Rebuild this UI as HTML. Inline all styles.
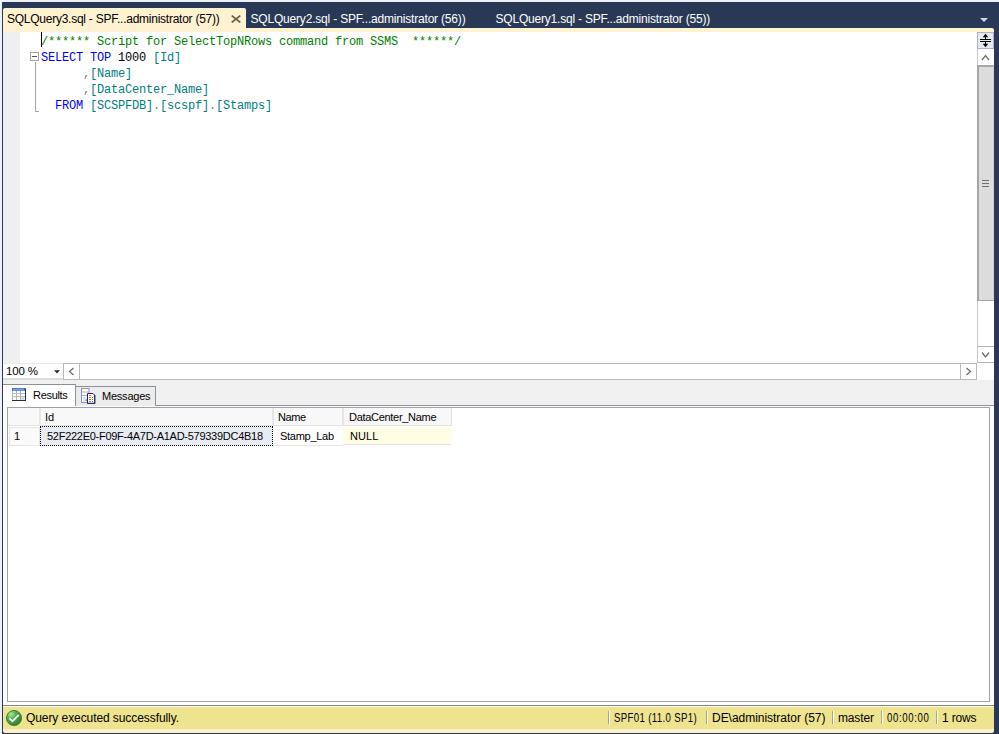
<!DOCTYPE html>
<html><head><meta charset="utf-8">
<style>
*{margin:0;padding:0;box-sizing:border-box}
html,body{width:999px;height:734px;overflow:hidden;background:#eef1f9;position:relative}
.a{position:absolute}
.ui{font-family:"Liberation Sans",sans-serif;font-size:12px;white-space:pre;line-height:14px}
.mono{font-family:"Liberation Mono",monospace;font-size:12px;white-space:pre;line-height:16px;letter-spacing:-0.2px}
.cm{color:#008000}.kw{color:#0000ff}.id{color:#008080}.op{color:#808080}.nm{color:#000}
</style></head><body>
<!-- navy frame -->
<div class="a" style="left:2px;top:2px;width:997px;height:732px;background:#293955"></div>

<!-- tabs -->
<div class="a" style="left:3px;top:8px;width:243px;height:22px;background:#fff2d0;border-radius:2px 2px 0 0"></div>
<div class="a ui" style="left:7px;top:12px;color:#000;letter-spacing:-0.25px">SQLQuery3.sql - SPF...administrator (57))</div>
<svg class="a" style="left:231px;top:15px" width="10" height="8" viewBox="0 0 10 8"><path d="M0.7 0.6L9.3 7.4M9.3 0.6L0.7 7.4" stroke="#6b5a3a" stroke-width="1.6"/></svg>
<div class="a ui" style="left:250.5px;top:12px;color:#fff;letter-spacing:-0.19px">SQLQuery2.sql - SPF...administrator (56))</div>
<div class="a ui" style="left:495.5px;top:12px;color:#fff;letter-spacing:-0.2px">SQLQuery1.sql - SPF...administrator (55))</div>
<svg class="a" style="left:980px;top:18px" width="8" height="4" viewBox="0 0 8 4"><path d="M0 0H8L4 4Z" fill="#cfd6e5"/></svg>

<!-- yellow line -->
<div class="a" style="left:3px;top:28px;width:991px;height:4px;background:#fff2d0;border-radius:0 2px 0 0"></div>

<!-- editor -->
<div class="a" style="left:3px;top:32px;width:974px;height:331px;background:#fff"></div>
<div class="a" style="left:3px;top:32px;width:17px;height:331px;background:#efefef"></div>
<div class="a" style="left:41px;top:32px;width:1px;height:15px;background:#000"></div>
<!-- fold -->
<div class="a" style="left:30px;top:52px;width:9px;height:9px;border:1px solid #a5a5a5;background:#fff"></div>
<div class="a" style="left:32px;top:56px;width:5px;height:1px;background:#555"></div>
<div class="a" style="left:35px;top:62px;width:1px;height:50px;background:#a5a5a5"></div>
<div class="a" style="left:35px;top:111px;width:4px;height:1px;background:#a5a5a5"></div>

<div class="a mono" style="left:41px;top:34px"><span class="cm">/****** Script for SelectTopNRows command from SSMS  ******/</span>
<span class="kw">SELECT</span> <span class="kw">TOP</span> <span class="nm">1000</span> <span class="id">[Id]</span>
      <span class="op">,</span><span class="id">[Name]</span>
      <span class="op">,</span><span class="id">[DataCenter_Name]</span>
  <span class="kw">FROM</span> <span class="id">[SCSPFDB]</span><span class="op">.</span><span class="id">[scspf]</span><span class="op">.</span><span class="id">[Stamps]</span></div>

<!-- editor vscroll -->
<div class="a" style="left:977px;top:32px;width:17px;height:331px;background:#fff;border-left:1px solid #c8c8c8"></div>
<div class="a" style="left:977px;top:32px;width:17px;height:17px;background:#e6e9ef;border:1px solid #a9b3c4"></div>
<svg class="a" style="left:977px;top:32px" width="17" height="17" viewBox="0 0 17 17">
<path d="M3 7.5H14M3 9.5H14" stroke="#000" stroke-width="1"/>
<path d="M8.5 1.8L5.7 5.2H11.3Z M8.5 15.2L5.7 11.8H11.3Z" fill="#000"/>
<path d="M8.5 5V7M8.5 10V12" stroke="#000" stroke-width="1"/>
</svg>
<svg class="a" style="left:977px;top:49px" width="17" height="16" viewBox="0 0 17 16"><path d="M5 11L8.5 6.5L12 11" stroke="#6d6d6d" stroke-width="1.3" fill="none"/></svg>
<div class="a" style="left:977px;top:65px;width:17px;height:236px;background:#dcdcdc;border-left:2px solid #a6a6a6;border-top:2px solid #a6a6a6;border-bottom:1px solid #a6a6a6;border-right:1px solid #d0d0d0"></div>
<div class="a" style="left:982px;top:180px;width:7px;height:1px;background:#707070"></div>
<div class="a" style="left:982px;top:183px;width:7px;height:1px;background:#707070"></div>
<div class="a" style="left:982px;top:186px;width:7px;height:1px;background:#707070"></div>
<div class="a" style="left:977px;top:346px;width:17px;height:17px;border-top:1px solid #b5b5b5;border-bottom:1px solid #b5b5b5"></div>
<svg class="a" style="left:977px;top:346px" width="17" height="17" viewBox="0 0 17 17"><path d="M5 6.5L8.5 11L12 6.5" stroke="#6d6d6d" stroke-width="1.3" fill="none"/></svg>

<!-- zoom/hscroll bar -->
<div class="a" style="left:3px;top:363px;width:991px;height:17px;background:#fff"></div>
<div class="a" style="left:3px;top:363px;width:60px;height:17px;background:#fff;border-top:1px solid #e8e8e8;border-bottom:2px solid #dcdcdc"></div>
<div class="a ui" style="left:6px;top:364px;color:#000;font-size:11.5px;letter-spacing:-0.15px">100 %</div>
<svg class="a" style="left:54px;top:370px" width="6" height="4" viewBox="0 0 6 4"><path d="M0 0.3H6L3 3.6Z" fill="#1e2a40"/></svg>
<div class="a" style="left:63px;top:363px;width:898px;height:17px;border:1px solid #b8b8b8"></div>
<div class="a" style="left:79px;top:363px;width:1px;height:17px;background:#b8b8b8"></div>
<div class="a" style="left:960px;top:363px;width:17px;height:17px;border:1px solid #b8b8b8"></div>
<svg class="a" style="left:63px;top:363px" width="17" height="17" viewBox="0 0 17 17"><path d="M10.5 5L6.5 8.5L10.5 12" stroke="#6d6d6d" stroke-width="1.3" fill="none"/></svg>
<svg class="a" style="left:960px;top:363px" width="17" height="17" viewBox="0 0 17 17"><path d="M6.5 5L10.5 8.5L6.5 12" stroke="#6d6d6d" stroke-width="1.3" fill="none"/></svg>

<!-- splitter + results tab strip -->
<div class="a" style="left:3px;top:380px;width:991px;height:27px;background:#f0f0f0"></div>
<div class="a" style="left:3px;top:405px;width:991px;height:1px;background:#8c9099"></div>
<div class="a" style="left:3px;top:384px;width:73px;height:23px;background:#fff;border-top:1px solid #8c9099;border-right:1px solid #8c9099"></div>
<div class="a" style="left:75px;top:386px;width:81px;height:20px;background:#ececec;border:1px solid #8c9099;border-bottom:none"></div>
<!-- results icon -->
<svg class="a" style="left:12px;top:388px" width="14" height="13" viewBox="0 0 14 13">
<rect x="0" y="0" width="14" height="13" fill="#b4b4b4"/>
<rect x="1" y="3" width="12" height="9" fill="#fff"/>
<rect x="0" y="0" width="14" height="2.6" fill="#3f72d8"/>
<rect x="1" y="0.8" width="11" height="1.2" fill="#78a4ec"/>
<path d="M1 5.6H13M1 8.6H13M4.5 3V12M8.5 3V12" stroke="#b4b4b4" stroke-width="1"/>
<path d="M13.5 1V13M0 12.5H14" stroke="#2a2a3a" stroke-width="1"/>
<rect x="9.2" y="9.2" width="3.3" height="2.5" fill="#b8dcf8"/>
</svg>
<div class="a ui" style="left:33px;top:388px;color:#000;font-size:11px;letter-spacing:-0.31px">Results</div>
<!-- messages icon -->
<svg class="a" style="left:81px;top:388px" width="15" height="16" viewBox="0 0 15 16">
<rect x="0.5" y="0.5" width="7.5" height="14" fill="#fff" stroke="#8a8ad0"/>
<path d="M0.5 0.5H8" stroke="#9a9a9a"/>
<path d="M1 4H7.5M1 7.5H7.5" stroke="#b0b0b8" stroke-width="1"/>
<rect x="2" y="8.5" width="5" height="5" fill="#d8ecfa"/>
<rect x="4.5" y="11.5" width="1.5" height="1.5" fill="#3cc040"/>
<path d="M6.5 5.5H12L13.8 7.3V15.5H6.5Z" fill="#fff" stroke="#20206a" stroke-width="1"/>
<path d="M13.6 7V15.4H6.8" stroke="#2a2a70" stroke-width="1.1" fill="none"/>
<path d="M8 7.5H10M8 9.5H10M8 11.5H10M8 13.5H10" stroke="#f06030" stroke-width="1"/>
<path d="M11 9.5H12M11 11.5H12M11 13.5H12" stroke="#3a8a3a" stroke-width="1"/>
</svg>
<div class="a ui" style="left:102px;top:388.5px;color:#000;font-size:11px;letter-spacing:-0.22px">Messages</div>

<!-- results grid -->
<div class="a" style="left:3px;top:406px;width:991px;height:299px;background:#fcfcfc"></div>
<div class="a" style="left:7px;top:407px;width:983px;height:295px;background:#fff;border:1px solid #a0a0a8"></div>
<!-- header -->
<div class="a" style="left:8px;top:408px;width:444px;height:18px;background:#f8f8f8;border-right:1px solid #e2e2e2;border-bottom:1px solid #e2e2e2"></div>
<div class="a" style="left:39px;top:408px;width:2px;height:18px;background:#e6e6e6"></div>
<div class="a" style="left:272px;top:408px;width:2px;height:18px;background:#e6e6e6"></div>
<div class="a" style="left:342px;top:408px;width:2px;height:18px;background:#e6e6e6"></div>
<div class="a ui" style="left:45px;top:410px;color:#000;font-size:11px">Id</div>
<div class="a ui" style="left:278px;top:410px;color:#000;font-size:11px;letter-spacing:-0.41px">Name</div>
<div class="a ui" style="left:349px;top:410px;color:#000;font-size:11px;letter-spacing:-0.3px">DataCenter_Name</div>
<!-- row 1 -->
<div class="a" style="left:9px;top:427px;width:31px;height:19px;background:#fafafa;border:1px solid #e6e6e6"></div>
<div class="a ui" style="left:14px;top:429px;color:#000;font-size:11px">1</div>
<div class="a" style="left:40px;top:426px;width:233px;height:20px;background:#e8ecf2;border:1px dotted #000"></div>
<div class="a ui" style="left:47px;top:429px;color:#000;font-size:11px;letter-spacing:-0.275px">52F222E0-F09F-4A7D-A1AD-579339DC4B18</div>
<div class="a" style="left:273px;top:445px;width:70px;height:1px;background:#e6e6e6"></div>
<div class="a ui" style="left:280px;top:429px;color:#000;font-size:11px;letter-spacing:-0.28px">Stamp_Lab</div>
<div class="a" style="left:343px;top:427px;width:108px;height:18px;background:#fffde3;border-bottom:1px solid #e6e6e6"></div>
<div class="a ui" style="left:350px;top:429px;color:#000;font-size:11px;letter-spacing:0.09px">NULL</div>

<!-- status bar -->
<div class="a" style="left:3px;top:702px;width:991px;height:3px;background:#fff"></div>
<div class="a" style="left:3px;top:705px;width:991px;height:1px;background:#80838c"></div>
<div class="a" style="left:3px;top:706px;width:991px;height:1px;background:#fbfbf0"></div>
<div class="a" style="left:3px;top:707px;width:991px;height:26px;background:#fdf0cf;border-radius:0 0 2px 2px"></div>
<div class="a" style="left:3px;top:707px;width:991px;height:22px;background:#eee38e"></div>
<svg class="a" style="left:6px;top:710px" width="16" height="16" viewBox="0 0 16 16">
<defs><radialGradient id="g" cx="0.3" cy="0.25" r="0.85"><stop offset="0" stop-color="#a8ec98"/><stop offset="0.35" stop-color="#5cb055"/><stop offset="0.8" stop-color="#3a8a36"/><stop offset="1" stop-color="#2c7a2a"/></radialGradient></defs>
<circle cx="8" cy="8" r="7.6" fill="url(#g)" stroke="#2a7428" stroke-width="0.8"/>
<path d="M3.5 8.4L6.4 11.3L12.6 5.1" stroke="#fff" stroke-width="1.7" fill="none"/>
</svg>
<div class="a ui" style="left:26px;top:711px;color:#000;letter-spacing:-0.08px">Query executed successfully.</div>
<div class="a" style="left:608px;top:711px;width:1px;height:13px;background:#a8a48a"></div><div class="a" style="left:609px;top:711px;width:1px;height:13px;background:#fff"></div>
<div class="a ui" style="left:614px;top:711px;color:#000;letter-spacing:0.45px;transform:scaleX(0.8);transform-origin:0 0">SPF01 (11.0 SP1)</div>
<div class="a" style="left:706px;top:711px;width:1px;height:13px;background:#a8a48a"></div><div class="a" style="left:707px;top:711px;width:1px;height:13px;background:#fff"></div>
<div class="a ui" style="left:712px;top:711px;color:#000;letter-spacing:-0.03px">DE\administrator (57)</div>
<div class="a" style="left:832px;top:711px;width:1px;height:13px;background:#a8a48a"></div><div class="a" style="left:833px;top:711px;width:1px;height:13px;background:#fff"></div>
<div class="a ui" style="left:838px;top:711px;color:#000;letter-spacing:-0.15px">master</div>
<div class="a" style="left:881px;top:711px;width:1px;height:13px;background:#a8a48a"></div><div class="a" style="left:882px;top:711px;width:1px;height:13px;background:#fff"></div>
<div class="a ui" style="left:887px;top:711px;color:#000;letter-spacing:0.8px;transform:scaleX(0.8);transform-origin:0 0">00:00:00</div>
<div class="a" style="left:936px;top:711px;width:1px;height:13px;background:#a8a48a"></div><div class="a" style="left:937px;top:711px;width:1px;height:13px;background:#fff"></div>
<div class="a ui" style="left:942px;top:711px;color:#000;letter-spacing:-0.15px">1 rows</div>
</body></html>
